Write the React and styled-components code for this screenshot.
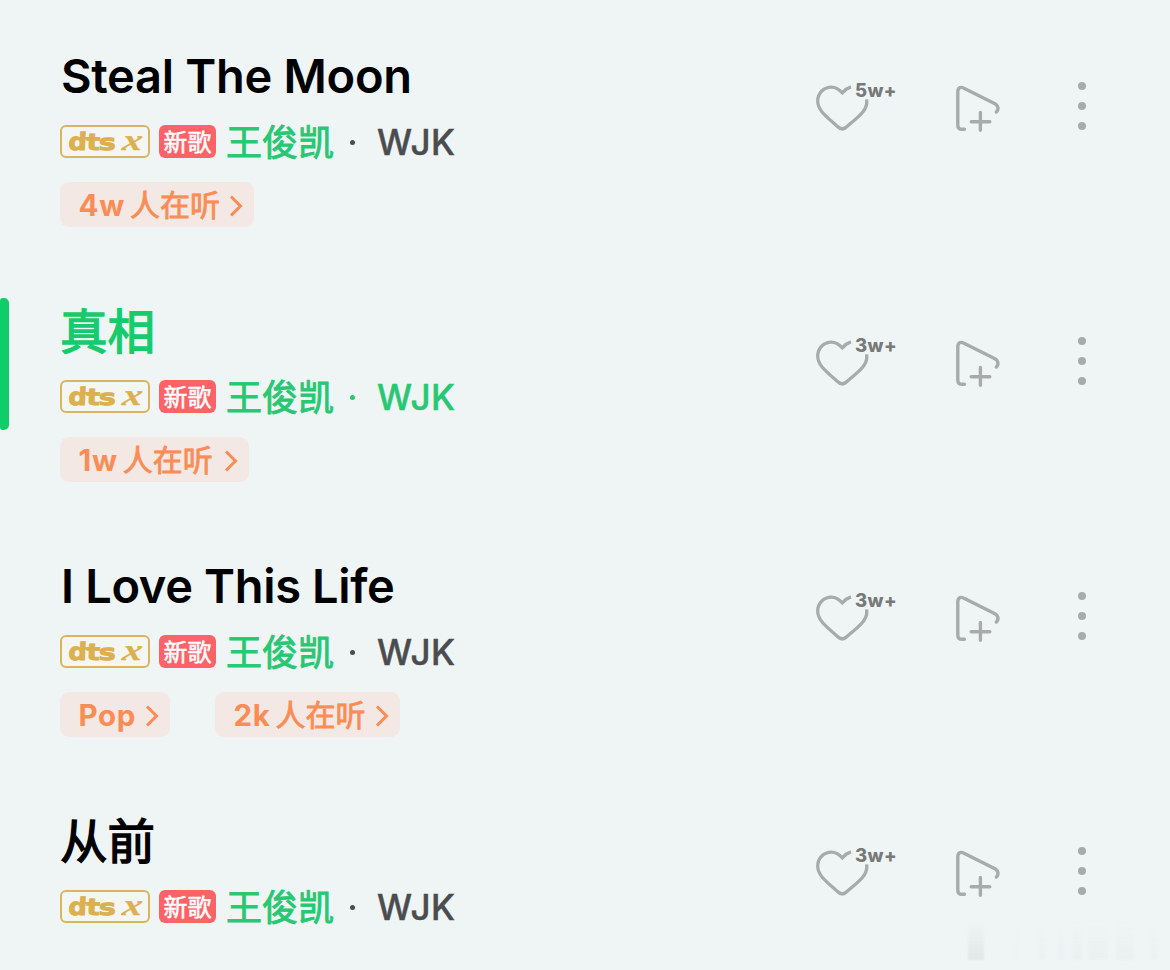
import React from 'react';
import styled, { createGlobalStyle } from 'styled-components';

const GlobalStyle = createGlobalStyle`
  * {
    box-sizing: border-box;
  }

  body {
    margin: 0;
    background: #eff5f5;
    font-family: Inter, 'Noto Sans CJK SC', sans-serif;
  }
`;

const Page = styled.main`
  position: relative;
  width: 1170px;
  height: 970px;
  padding-top: 43px;
  overflow: hidden;
  background: #eff5f5;
`;

const Song = styled.article`
  display: flex;
  height: 255px;
`;

const PlayingBar = styled.div`
  width: 9px;
  height: 132px;
  margin-right: 51px;
  border-radius: 3px 5px 5px 3px;
  background: ${({ $active }) => ($active ? '#0fce69' : 'transparent')};
`;

const Info = styled.div`
  flex: 1;
`;

const Title = styled.h2`
  height: 66px;
  margin: 0;
  padding-left: ${({ $cjk }) => ($cjk ? '0' : '1px')};
  font-size: ${({ $cjk }) => ($cjk ? '47.5px' : '47px')};
  font-weight: ${({ $cjk }) => ($cjk ? 400 : 600)};
  line-height: ${({ $cjk }) => ($cjk ? '68px' : '66px')};
  letter-spacing: ${({ $spacing }) => $spacing || '0'};
  white-space: nowrap;
  color: ${({ $active }) => ($active ? '#17cb6c' : '#000')};
  -webkit-text-stroke: ${({ $cjk }) => ($cjk ? '1.4px' : '0')};
`;

const Meta = styled.div`
  display: flex;
  align-items: center;
  height: 33px;
  margin-top: 16px;
  white-space: nowrap;
`;

const DtsBadge = styled.span`
  display: flex;
  align-items: center;
  justify-content: center;
  width: 90px;
  height: 33px;
  margin-right: 9px;
  border: 2px solid #d9b560;
  border-radius: 6px;
  background: #f3f6f3;
`;

const NewBadge = styled.span`
  width: 57px;
  height: 33px;
  margin-right: 10px;
  border-radius: 6px;
  background: #fb6368;
  color: #fff;
  font-size: 24px;
  line-height: 35px;
  text-align: center;
  -webkit-text-stroke: 0.5px;
`;

const Artist = styled.span`
  width: 108px;
  padding-top: 3px;
  color: #28c772;
  font-size: 36px;
  line-height: 33px;
  -webkit-text-stroke: 0.9px;
`;

const Dot = styled.i`
  width: 5px;
  height: 5px;
  margin: 2px 22px 0 16px;
  border-radius: 50%;
  background: ${({ $active }) => ($active ? '#28c772' : '#4b4c4e')};
`;

const Album = styled.span`
  padding-top: 1px;
  color: ${({ $active }) => ($active ? '#28c772' : '#4b4c4e')};
  font-size: 35px;
  font-weight: 500;
  line-height: 33px;
  letter-spacing: 0.5px;
  -webkit-text-stroke: 0.4px;
`;

const Tags = styled.div`
  display: flex;
  gap: 45px;
  margin-top: 24px;
`;

const Tag = styled.span`
  display: flex;
  align-items: center;
  justify-content: space-between;
  width: ${({ $width }) => $width}px;
  height: 45px;
  padding: 2px 11px 0 18.5px;
  border-radius: 9px;
  background: #f3e8e3;
  color: #fa8c55;
  font-size: 30px;
  line-height: 43px;
  white-space: nowrap;
`;

const TagText = styled.span`
  display: flex;
  gap: 5px;
`;

const Count = styled.b`
  font-size: 29.5px;
  font-weight: 700;
  letter-spacing: 0.7px;
`;

const Listening = styled.span`
  -webkit-text-stroke: 0.8px;
`;

const Actions = styled.div`
  display: flex;
  align-items: flex-start;
  height: 132px;
  padding-top: 37px;
  margin-right: 84px;
`;

const Like = styled.div`
  position: relative;
  width: 140px;
  height: 56px;
`;

const LikeCount = styled.span`
  position: absolute;
  left: 43px;
  top: 0;
  color: #77797a;
  font-size: 18.5px;
  font-weight: 800;
  line-height: 20px;
  letter-spacing: 0.4px;
`;

const More = styled.div`
  display: flex;
  flex-direction: column;
  gap: 12px;
  width: 8px;
  margin: 2px 0 0 74px;
`;

const MoreDot = styled.i`
  width: 8px;
  height: 8px;
  border-radius: 50%;
  background: #a8abac;
`;

const Ghost = styled.div`
  position: absolute;
  right: 10px;
  bottom: 10px;
  display: flex;
  width: 200px;
  height: 38px;
  opacity: 0.6;
  filter: blur(1px);
`;

const GhostBlock = styled.i`
  width: ${({ $width }) => $width}px;
  margin-left: ${({ $gap }) => $gap}px;
  background: linear-gradient(transparent, ${({ $color }) => $color});
`;

const Heart = () => (
  <svg width="60" height="56" viewBox="0 0 60 56" fill="none" stroke="#a8abac" strokeWidth="3.3">
    <path d="M39 6.9C36 7.8 33 9.8 30.3 12.8C27 9.3 24 7.1 19.5 7.1C11.5 7.1 5.7 13.5 5.7 21C5.7 30 13.5 36 25.5 46.5C28.5 49.5 32 49.5 35 46.5C46 37 54.8 31 54.8 22L54.6 19.3" />
  </svg>
);

const AddToQueue = () => (
  <svg
    width="52"
    height="56"
    viewBox="0 0 52 56"
    fill="none"
    stroke="#a8abac"
    strokeWidth="3.4"
    strokeLinecap="round"
  >
    <path d="M12.5 49.3H10Q5.8 49.3 5.8 45V12C5.8 7.7 8.5 6.3 12 8.2L42.5 23.5C46.5 25.6 47 29.5 44.3 32" />
    <path d="M19.2 41.7H37.8M28.4 32.5V50.3" />
  </svg>
);

const Chevron = () => (
  <svg width="14" height="22" viewBox="0 0 14 22" fill="none" stroke="#fa8c55" strokeWidth="3">
    <path d="M2 1.5L11.5 11L2 20.5" />
  </svg>
);

// wordmark is stretched sideways, the bar joins the d and the t
const DtsLogo = () => (
  <svg width="86" height="29" viewBox="0 0 86 29" fill="#dcb04e" stroke="#dcb04e">
    <g fontFamily="DejaVu Sans" fontWeight="700">
      <text transform="translate(6 23.2) skewX(-3) scale(1.08 1)" fontSize="24" strokeWidth="0.9">
        d
      </text>
      <text transform="translate(24 23.2) skewX(-3) scale(1.25 1)" fontSize="23" strokeWidth="0.8">
        t
      </text>
      <text transform="translate(36.5 23.2) skewX(-3) scale(1.3 1)" fontSize="22" strokeWidth="1">
        s
      </text>
    </g>
    <path d="M20 11.3H36" strokeWidth="2.2" />
    <text
      transform="translate(59.5 23.2) skewX(-8) scale(1.32 1)"
      fontFamily="Liberation Serif"
      fontSize="30"
      fontWeight="700"
      fontStyle="italic"
      strokeWidth="0.3"
    >
      x
    </text>
  </svg>
);

const songs = [
  { title: 'Steal The Moon', likes: '5w+', spacing: '-0.3px', tags: [{ count: '4w', width: 194, listening: true }] },
  { title: '真相', likes: '3w+', cjk: true, active: true, tags: [{ count: '1w', width: 189, listening: true }] },
  {
    title: 'I Love This Life',
    likes: '3w+',
    spacing: '-0.35px',
    tags: [
      { count: 'Pop', width: 110 },
      { count: '2k', width: 185, listening: true },
    ],
  },
  { title: '从前', likes: '3w+', cjk: true, tags: [] },
];

const ghostBlocks = [
  [16, 8, '#d8dddd'],
  [2, 32, '#e8eeee'],
  [8, 20, '#e9efef'],
  [6, 12, '#e8eff0'],
  [10, 8, '#e6eded'],
  [20, 6, '#e8eeee'],
  [18, 8, '#e7eded'],
  [8, 16, '#e9efef'],
];

function SongRow({ song }) {
  const { title, likes, cjk, active, spacing, tags } = song;

  return (
    <Song>
      <PlayingBar $active={active} />
      <Info>
        <Title $cjk={cjk} $active={active} $spacing={spacing}>
          {title}
        </Title>
        <Meta>
          <DtsBadge>
            <DtsLogo />
          </DtsBadge>
          <NewBadge>新歌</NewBadge>
          <Artist>王俊凯</Artist>
          <Dot $active={active} />
          <Album $active={active}>WJK</Album>
        </Meta>
        <Tags>
          {tags.map((tag) => (
            <Tag key={tag.count} $width={tag.width}>
              <TagText>
                <Count>{tag.count}</Count>
                {tag.listening && <Listening>人在听</Listening>}
              </TagText>
              <Chevron />
            </Tag>
          ))}
        </Tags>
      </Info>
      <Actions>
        <Like>
          <Heart />
          <LikeCount>{likes}</LikeCount>
        </Like>
        <AddToQueue />
        <More>
          <MoreDot />
          <MoreDot />
          <MoreDot />
        </More>
      </Actions>
    </Song>
  );
}

function App() {
  return (
    <Page>
      <GlobalStyle />
      {songs.map((song) => (
        <SongRow key={song.title} song={song} />
      ))}
      <Ghost>
        {ghostBlocks.map(([width, gap, color], i) => (
          <GhostBlock key={i} $width={width} $gap={gap} $color={color} />
        ))}
      </Ghost>
    </Page>
  );
}

export default App;
